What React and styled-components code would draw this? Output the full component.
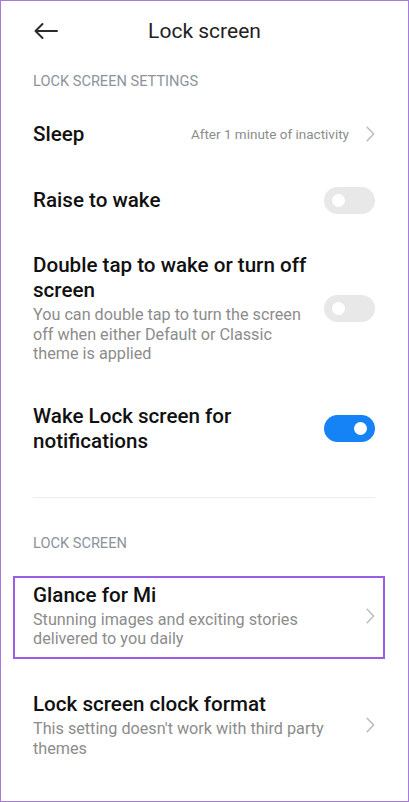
import React from "react";
import styled, { createGlobalStyle } from "styled-components";

const GlobalStyle = createGlobalStyle`
  html, body {
    margin: 0;
    padding: 0;
    background: #ffffff;
  }
  * {
    box-sizing: border-box;
  }
`;

const Screen = styled.div`
  width: 409px;
  height: 802px;
  border: 1px solid #a77bd9;
  background: #ffffff;
  font-family: Roboto, "Noto Sans", "Liberation Sans", sans-serif;
  color: #111111;
  display: flex;
  flex-direction: column;
  overflow: hidden;
`;

const Header = styled.div`
  height: 59px;
  display: flex;
  align-items: center;
  position: relative;
  padding-left: 32px;
`;

const BackButton = styled.div`
  width: 26px;
  height: 18px;
  display: flex;
  align-items: center;
`;

const Title = styled.div`
  position: absolute;
  left: 0;
  right: 0;
  text-align: center;
  font-size: 21px;
  font-weight: 400;
  color: #222222;
  pointer-events: none;
`;

const SectionLabel = styled.div`
  height: 40px;
  display: flex;
  align-items: center;
  padding: 0 32px;
  font-size: 14.6px;
  color: #8d939c;
  margin-top: ${(p) => p.$top || 0}px;
`;

const Row = styled.div`
  position: relative;
  min-height: ${(p) => p.$min || 0}px;
  display: flex;
  align-items: center;
  gap: 16px;
  padding: ${(p) => p.$pt ?? 20}px 33px ${(p) => p.$pb ?? 20}px 32px;
`;

const TextCol = styled.div`
  flex: 1;
  display: flex;
  flex-direction: column;
  gap: 2px;
`;

const RowTitle = styled.div`
  font-size: 20.6px;
  font-weight: 500;
  line-height: 25px;
  color: #111111;
  max-width: ${(p) => p.$max || "none"};
`;

const RowSub = styled.div`
  font-size: 16.2px;
  line-height: 19.6px;
  color: #8c8c8c;
  max-width: ${(p) => p.$max || "none"};
`;

const Value = styled.div`
  font-size: 13.5px;
  color: #8c8c8c;
  margin-right: 1px;
`;

const Chevron = styled.svg`
  flex: none;
  width: 9px;
  height: 16px;
`;

const Switch = styled.div`
  flex: none;
  width: 51px;
  height: 27px;
  border-radius: 14px;
  background: ${(p) => (p.$on ? "#1582f5" : "#e8e8e8")};
  display: flex;
  align-items: center;
  justify-content: ${(p) => (p.$on ? "flex-end" : "flex-start")};
  padding: 0 8px;
`;

const Knob = styled.div`
  width: 13px;
  height: 13px;
  border-radius: 50%;
  background: #ffffff;
`;

const Divider = styled.div`
  height: 1px;
  background: #ececec;
  margin: 23px 33px 0 32px;
`;

const Highlight = styled.div`
  position: absolute;
  left: 12px;
  top: 13px;
  width: 372px;
  height: 83px;
  border: 2.5px solid #9b5de5;
  pointer-events: none;
`;

const Arrow = () => (
  <svg width="25" height="18" viewBox="0 0 25 18" fill="none">
    <path
      d="M24 9H2.5M9.5 2L2.5 9L9.5 16"
      stroke="#2b2b2b"
      strokeWidth="2"
      strokeLinecap="round"
      strokeLinejoin="round"
    />
  </svg>
);

const Next = () => (
  <Chevron viewBox="0 0 9 16" fill="none">
    <path
      d="M1.2 1.2L7.6 8L1.2 14.8"
      stroke="#b9b9b9"
      strokeWidth="1.4"
      strokeLinecap="round"
      strokeLinejoin="round"
    />
  </Chevron>
);

const Toggle = ({ on }) => (
  <Switch $on={on}>
    <Knob />
  </Switch>
);

export default function App() {
  return (
    <>
      <GlobalStyle />
      <Screen>
        <Header>
          <BackButton>
            <Arrow />
          </BackButton>
          <Title>Lock screen</Title>
        </Header>

        <SectionLabel $top={1}>LOCK SCREEN SETTINGS</SectionLabel>

        <Row $min={66} $pt={0} $pb={0}>
          <TextCol>
            <RowTitle>Sleep</RowTitle>
          </TextCol>
          <Value>After 1 minute of inactivity</Value>
          <Next />
        </Row>

        <Row $min={66} $pt={0} $pb={0}>
          <TextCol>
            <RowTitle>Raise to wake</RowTitle>
          </TextCol>
          <Toggle on={false} />
        </Row>

        <Row>
          <TextCol>
            <RowTitle $max="285px">Double tap to wake or turn off screen</RowTitle>
            <RowSub $max="285px">
              You can double tap to turn the screen off when either Default or
              Classic theme is applied
            </RowSub>
          </TextCol>
          <Toggle on={false} />
        </Row>

        <Row>
          <TextCol>
            <RowTitle $max="240px">Wake Lock screen for notifications</RowTitle>
          </TextCol>
          <Toggle on />
        </Row>

        <Divider />

        <SectionLabel $top={25}>LOCK SCREEN</SectionLabel>

        <Row $pb={23}>
          <TextCol>
            <RowTitle>Glance for Mi</RowTitle>
            <RowSub $max="280px">
              Stunning images and exciting stories delivered to you daily
            </RowSub>
          </TextCol>
          <Next />
          <Highlight />
        </Row>

        <Row>
          <TextCol>
            <RowTitle>Lock screen clock format</RowTitle>
            <RowSub $max="305px">
              This setting doesn't work with third party themes
            </RowSub>
          </TextCol>
          <Next />
        </Row>
      </Screen>
    </>
  );
}
